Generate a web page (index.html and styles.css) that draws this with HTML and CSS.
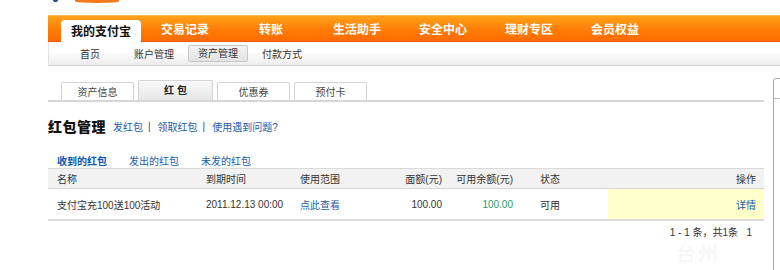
FILE: index.html
```html
<!DOCTYPE html>
<html lang="zh-CN">
<head>
<meta charset="utf-8">
<title>红包管理</title>
<link rel="stylesheet" href="styles.css">
</head>
<body>
<div class="page">
  <div class="logo-strip"><span class="logo-dot"></span><span class="logo-oval"></span></div>
  <div class="main">
    <div class="nav">
      <span class="nav-item active">我的支付宝</span>
      <span class="nav-item">交易记录</span>
      <span class="nav-item">转账</span>
      <span class="nav-item">生活助手</span>
      <span class="nav-item">安全中心</span>
      <span class="nav-item">理财专区</span>
      <span class="nav-item">会员权益</span>
    </div>
    <div class="subnav">
      <span class="sub-item">首页</span>
      <span class="sub-item">账户管理</span>
      <span class="sub-item"><span class="sub-btn">资产管理</span></span>
      <span class="sub-item">付款方式</span>
    </div>
    <div class="tabs">
      <span class="tab">资产信息</span>
      <span class="tab active">红 包</span>
      <span class="tab">优惠券</span>
      <span class="tab">预付卡</span>
    </div>
    <div class="title-row">
      <h1 class="title">红包管理</h1>
      <a class="link">发红包</a><span class="sep">|</span>
      <a class="link">领取红包</a><span class="sep">|</span>
      <a class="link">使用遇到问题?</a>
    </div>
    <div class="subtabs">
      <a class="subtab current">收到的红包</a>
      <a class="subtab">发出的红包</a>
      <a class="subtab">未发的红包</a>
    </div>
    <div class="table">
      <div class="row head">
        <span class="c c1">名称</span>
        <span class="c c2">到期时间</span>
        <span class="c c3">使用范围</span>
        <span class="c c4">面额(元)</span>
        <span class="c c5">可用余额(元)</span>
        <span class="c c6">状态</span>
        <span class="c c7">操作</span>
      </div>
      <div class="row body">
        <span class="c c1">支付宝充100送100活动</span>
        <span class="c c2">2011.12.13 00:00</span>
        <span class="c c3"><a class="link">点此查看</a></span>
        <span class="c c4">100.00</span>
        <span class="c c5 green">100.00</span>
        <span class="c c6">可用</span>
        <span class="c c7 hl"><a class="link">详情</a></span>
      </div>
    </div>
    <div class="pager">1 - 1 条，共1条 &nbsp; 1</div>
    <div class="watermark">台州</div>
  </div>
  <div class="side-box"><div class="side-head"></div></div>
</div>
</body>
</html>
```
FILE: styles.css
```css
* { box-sizing: border-box; }
html, body { margin: 0; padding: 0; background: #fff; }
body {
  font-family: "Liberation Sans", "Noto Sans CJK SC", sans-serif;
  font-size: 10px;
  color: #333;
  width: 780px;
  height: 270px;
  overflow: hidden;
}
.page { position: relative; width: 780px; height: 270px; }
.logo-strip { height: 15px; display: flex; align-items: flex-start; }
.logo-dot { margin-left: 53px; width: 5px; height: 2px; background: #1d4a96; border-radius: 0 0 3px 3px; }
.logo-oval { margin-left: 17px; width: 44px; height: 3px; background: #f27a1a; border-radius: 0 0 50% 50%; }
.main { margin-left: 48px; width: 716px; position: relative; }

.nav {
  height: 27px;
  width: 732px;
  background: linear-gradient(#ffa21a, #ff7d06 55%, #ff6a00);
  border-top: 1px solid #ffbd55;
  border-bottom: 1px solid #e85a00;
  display: flex;
  align-items: stretch;
  padding-left: 13px;
}
.nav-item {
  width: 86px;
  padding-top: 2px;
  line-height: 25px;
  text-align: center;
  color: #fff;
  font-weight: bold;
  font-size: 12px;
}
.nav-item:nth-child(2) { margin-left: 1px; }
.nav-item.active {
  width: 80px;
  padding-top: 1px;
  margin-top: 4px;
  margin-bottom: -1px;
  line-height: 23px;
  background: #fff;
  color: #111;
  border-radius: 4px 4px 0 0;
}

.subnav {
  height: 24px;
  width: 732px;
  background: linear-gradient(#fff, #fff 40%, #ececec);
  border-left: 1px solid #e2e2e2;
  border-bottom: 1px solid #d4d4d4;
  display: flex;
  align-items: center;
  padding-left: 9px;
}
.sub-item { width: 64px; text-align: center; color: #333; display: flex; justify-content: center; }
.sub-btn {
  display: block;
  width: 60px;
  height: 17px;
  line-height: 15px;
  background: linear-gradient(#f4f4f4, #e2e2e2);
  border: 1px solid #c8c8c8;
  border-radius: 2px;
}

.tabs {
  margin-top: 15px;
  height: 21px;
  display: flex;
  align-items: flex-end;
  gap: 4px;
  padding-left: 13px;
  border-bottom: 2px solid #d6d6d6;
}
.tab {
  width: 73px;
  height: 18px;
  line-height: 19px;
  text-align: center;
  border: 1px solid #d4d4d4;
  border-bottom: none;
  border-radius: 2px 2px 0 0;
  background: #fff;
  color: #444;
}
.tab.active {
  width: 75px;
  height: 20px;
  line-height: 19px;
  font-weight: bold;
  color: #222;
  background: linear-gradient(#fafafa, #e6e6e6);
}

.title-row {
  margin-top: 15px;
  height: 18px;
  display: flex;
  align-items: center;
}
.title {
  margin: 0 7px 0 0;
  font-size: 14px;
  font-weight: 900;
  color: #111;
  letter-spacing: 0.5px;
}
.link { color: #1a5ca8; text-decoration: none; }
.sep { margin: 0 7px 0 5px; color: #444; }

.subtabs {
  margin-top: 17px;
  height: 16px;
  display: flex;
  align-items: center;
  padding-left: 9px;
}
.subtab { color: #1a5ca8; margin-right: 22px; }
.subtab.current { font-weight: bold; color: #0d55b0; }

.table { margin-top: 0; width: 716px; border-top: 1px solid #dadada; }
.row {
  display: grid;
  grid-template-columns: 149px 94px 89px 71px 71px 86px 156px;
}
.row.head { height: 20px; background: #f2f2f2; border-bottom: 1px solid #d6d6d6; }
.row.body { height: 32px; border-bottom: 2px solid #dcdcdc; }
.c { display: flex; align-items: center; padding-left: 9px; color: #333; }
.c4, .c5 { justify-content: flex-end; padding-left: 0; padding-right: 9px; }
.c6 { padding-left: 18px; }
.c7 { justify-content: flex-end; padding-right: 8px; }
.hl { background: #ffffcc; }
.green { color: #2a9b6a; }

.pager {
  margin-top: 6px;
  text-align: right;
  padding-right: 12px;
  color: #333;
  height: 12px;
  line-height: 12px;
}
.watermark {
  margin-top: 4px;
  padding-left: 628px;
  font-size: 20px;
  color: #f6f6f6;
  line-height: 22px;
  letter-spacing: 2px;
}

.side-box {
  position: absolute;
  left: 773px;
  top: 78px;
  width: 30px;
  height: 200px;
  border: 1px solid #a8a8a8;
  border-radius: 3px;
  background: #fff;
}
.side-head { height: 20px; border-bottom: 1px solid #b8b8b8; }
```
